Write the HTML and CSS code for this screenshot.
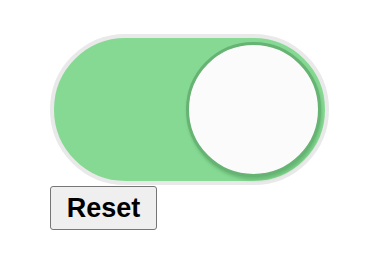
FILE: index.html
```html
<!DOCTYPE html>
<html>
<head>
<meta charset="utf-8">
<link rel="stylesheet" href="styles.css">
</head>
<body>
<div class="page">
  <div class="toggle">
    <div class="track">
      <div class="knob"></div>
    </div>
  </div>
  <button class="reset">Reset</button>
</div>
</body>
</html>
```
FILE: styles.css
```css
html, body {
  margin: 0;
  padding: 0;
  background: #ffffff;
}
.page {
  padding: 34px 0 0 50px;
  display: flex;
  flex-direction: column;
  align-items: flex-start;
}
.toggle {
  width: 279px;
  height: 151px;
  box-sizing: border-box;
  border: 4px solid #e9e9e9;
  border-radius: 76px;
  background: #86d993;
  display: flex;
  align-items: center;
  justify-content: flex-end;
  padding-right: 4px;
}
.track {
  display: flex;
  align-items: center;
}
.knob {
  width: 129px;
  height: 129px;
  border-radius: 50%;
  background: #fbfbfb;
  border: 3px solid #66b373;
  box-shadow: 1px 3px 3px rgba(70, 150, 85, 0.45);
}
.reset {
  margin-top: 1px;
  width: 107px;
  height: 44px;
  box-sizing: border-box;
  border: 1px solid #767676;
  border-radius: 3px;
  background: #efefef;
  font-family: "Liberation Sans", Arial, sans-serif;
  font-weight: bold;
  font-size: 27px;
  color: #000;
  padding: 0;
}
```
